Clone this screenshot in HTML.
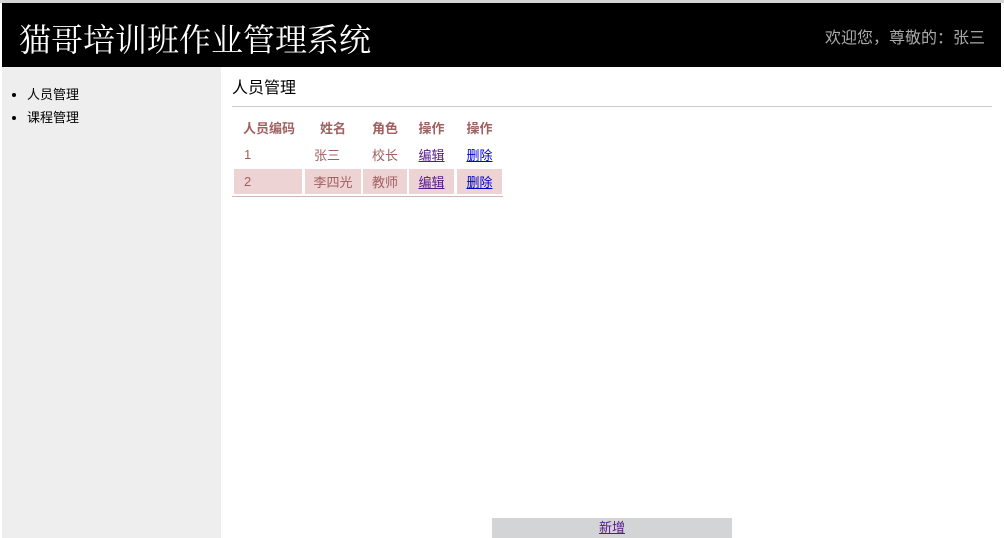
<!DOCTYPE html>
<html><head><meta charset="utf-8"><style>
*{margin:0;padding:0;box-sizing:border-box}
body{width:1004px;height:538px;overflow:hidden;background:#fff;font-family:"Liberation Sans","Noto Sans CJK SC",sans-serif;font-size:13px;position:relative}
.topb{position:absolute;left:0;top:0;width:1004px;height:3px;background:#d4d4d4}
.hdr{position:absolute;left:2px;top:3px;width:999px;height:64px;background:#000}
.hdr h1{position:absolute;left:17px;top:12px;font-family:"Liberation Serif","Noto Serif CJK SC",serif;font-weight:normal;font-size:32px;color:#fff;letter-spacing:0px}
.hdr .w{position:absolute;right:16px;top:21px;color:#aaa;font-size:16px}
.side{position:absolute;left:2px;top:67px;width:219px;height:471px;background:#eeeeee}
.side ul{position:absolute;left:25px;top:16px;list-style:disc;font-size:13px;line-height:23px;color:#000}
.ttl{position:absolute;left:232px;top:74px;font-size:16px;color:#000}
.hr{position:absolute;left:232px;top:106px;width:760px;height:1px;background:#ccc}
.c{position:absolute;color:#a06060;text-align:center;font-size:13px}
.h{font-weight:bold;top:118px}
.r1{top:145px}
.r2{top:172px}
.n{top:147px}
.n2{top:174px}
.bg{position:absolute;top:169px;height:25px;background:#edd3d3}
a{color:#551a8b;text-decoration:underline}
a.b{color:#0000cc}
.bl{position:absolute;left:232px;top:196px;width:271px;height:1px;background:#d0b8b8}
.add{position:absolute;left:492px;top:518px;width:240px;height:20px;background:#d3d4d6;text-align:center;font-size:13px;line-height:19px}
</style></head><body>
<div class="topb"></div>
<div class="hdr"><h1>猫哥培训班作业管理系统</h1><div class="w">欢迎您，尊敬的：张三</div></div>
<div class="side"><ul><li>人员管理</li><li>课程管理</li></ul></div>
<div class="ttl">人员管理</div>
<div class="hr"></div>
<div class="bg" style="left:234px;width:68px"></div>
<div class="bg" style="left:305px;width:56px"></div>
<div class="bg" style="left:363px;width:44px"></div>
<div class="bg" style="left:409px;width:45px"></div>
<div class="bg" style="left:457px;width:45px"></div>
<div class="c h" style="left:234px;width:70px">人员编码</div>
<div class="c h" style="left:305px;width:56px">姓名</div>
<div class="c h" style="left:363px;width:44px">角色</div>
<div class="c h" style="left:409px;width:45px">操作</div>
<div class="c h" style="left:457px;width:45px">操作</div>
<div class="c n" style="left:244px">1</div>
<div class="c r1" style="left:305px;width:44px">张三</div>
<div class="c r1" style="left:363px;width:44px">校长</div>
<div class="c r1" style="left:409px;width:45px"><a>编辑</a></div>
<div class="c r1" style="left:457px;width:45px"><a class="b">删除</a></div>
<div class="c n2" style="left:244px">2</div>
<div class="c r2" style="left:305px;width:56px">李四光</div>
<div class="c r2" style="left:363px;width:44px">教师</div>
<div class="c r2" style="left:409px;width:45px"><a>编辑</a></div>
<div class="c r2" style="left:457px;width:45px"><a class="b">删除</a></div>
<div class="bl"></div>
<div class="add"><a>新增</a></div>
</body></html>
